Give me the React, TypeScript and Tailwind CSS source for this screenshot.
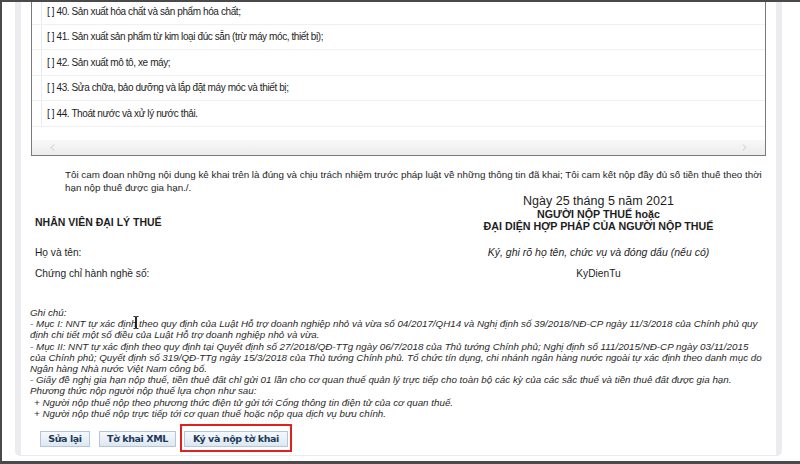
import { ChevronLeft, ChevronRight } from "lucide-react";

const industries = [
  "[ ] 40. Sản xuất hóa chất và sản phẩm hóa chất;",
  "[ ] 41. Sản xuất sản phẩm từ kim loại đúc sẵn (trừ máy móc, thiết bị);",
  "[ ] 42. Sản xuất mô tô, xe máy;",
  "[ ] 43. Sửa chữa, bảo dưỡng và lắp đặt máy móc và thiết bị;",
  "[ ] 44. Thoát nước và xử lý nước thải.",
];

const notes = [
  { text: "Ghi chú:", indent: false },
  { text: "- Mục I: NNT tự xác định theo quy định của Luật Hỗ trợ doanh nghiệp nhỏ và vừa số 04/2017/QH14 và Nghị định số 39/2018/NĐ-CP ngày 11/3/2018 của Chính phủ quy", indent: false },
  { text: "định chi tiết một số điều của Luật Hỗ trợ doanh nghiệp nhỏ và vừa.", indent: false },
  { text: "- Mục II: NNT tự xác định theo quy định tại Quyết định số 27/2018/QĐ-TTg ngày 06/7/2018 của Thủ tướng Chính phủ; Nghị định số 111/2015/NĐ-CP ngày 03/11/2015", indent: false },
  { text: "của Chính phủ; Quyết định số 319/QĐ-TTg ngày 15/3/2018 của Thủ tướng Chính phủ. Tổ chức tín dụng, chi nhánh ngân hàng nước ngoài tự xác định theo danh mục do", indent: false },
  { text: "Ngân hàng Nhà nước Việt Nam công bố.", indent: false },
  { text: "- Giấy đề nghị gia hạn nộp thuế, tiền thuê đất chỉ gửi 01 lần cho cơ quan thuế quản lý trực tiếp cho toàn bộ các kỳ của các sắc thuế và tiền thuê đất được gia hạn.", indent: false },
  { text: "Phương thức nộp người nộp thuế lựa chọn như sau:", indent: false },
  { text: "+ Người nộp thuế nộp theo phương thức điện tử gửi tới Cổng thông tin điện tử của cơ quan thuế.", indent: true },
  { text: "+ Người nộp thuế nộp trực tiếp tới cơ quan thuế hoặc nộp qua dịch vụ bưu chính.", indent: true },
];

const btn =
  "h-[16px] px-[6px] flex items-center justify-center border border-[#b4c6da] bg-gradient-to-b from-[#f6f9fc] to-[#dde7f1] text-[#1d3a5a] font-['DejaVu_Sans',sans-serif] font-bold text-[9.5px] tracking-[-0.4px] whitespace-nowrap";

export default function App() {
  return (
    <div className="relative w-[800px] h-[464px] overflow-hidden bg-white border-t-2 border-l-2 border-b-[3px] border-[#4a4a4a] font-['Liberation_Sans',Arial,sans-serif] text-[#1e1e1e]">
      <div className="flex h-full">
        <div className="w-[13px] shrink-0" />

        {/* main form panel */}
        <div className="w-[767px] h-[454px] shrink-0 flex flex-col border-x-[6px] border-b border-[#ebebf0] rounded-b-[5px]">
          {/* industries table (scrolled) */}
          <div className="mx-[10px] -mt-[3px] border-x border-b border-[#7a7a7a]">
            {industries.map((row) => (
              <div key={row} className="h-[25.5px] flex border-b border-[#f0f0f0]">
                <div className="w-[10px] border-r border-[#ebebeb]" />
                <div className="pl-[5px] flex items-center text-[10px] tracking-[-0.4px] whitespace-nowrap">{row}</div>
              </div>
            ))}
            <div className="h-[13.5px]" />
            <div className="h-[15px] flex items-center justify-between px-[15px] bg-gradient-to-b from-[#f8f8f8] to-[#ececec]">
              <ChevronLeft size={11} strokeWidth={2} className="text-[#c4c4c4]" />
              <ChevronRight size={11} strokeWidth={2} className="text-[#c4c4c4]" />
            </div>
          </div>

          {/* declaration */}
          <div className="mt-[12px] pl-[44px] text-[9.8px] leading-[13px] whitespace-nowrap">
            <div>
              Tôi cam đoan những nội dung kê khai trên là đúng và chịu trách nhiệm trước pháp luật về những thông tin đã khai; Tôi cam kết nộp đầy đủ số tiền thuế theo thời
            </div>
            <div>hạn nộp thuế được gia hạn./.</div>
          </div>

          {/* signatures */}
          <div className="mx-[10px] mt-[1px] grid grid-cols-[400px_1fr] text-[10.2px] whitespace-nowrap">
            <div />
            <div className="text-center text-[12.5px] leading-[13px]">Ngày 25 tháng 5 năm 2021</div>

            <div className="pl-[4px] pt-[8px] font-bold text-[10.5px] leading-[12px]">NHÂN VIÊN ĐẠI LÝ THUẾ</div>
            <div className="text-center font-bold text-[10.7px] leading-[12px]">
              <div>NGƯỜI NỘP THUẾ hoặc</div>
              <div>ĐẠI DIỆN HỢP PHÁP CỦA NGƯỜI NỘP THUẾ</div>
            </div>

            <div className="pl-[4px] mt-[14px] leading-[13px]">Họ và tên:</div>
            <div className="mt-[14px] text-center italic text-[10.5px] leading-[13px]">Ký, ghi rõ họ tên, chức vụ và đóng dấu (nếu có)</div>

            <div className="pl-[4px] mt-[7.5px] leading-[13px]">Chứng chỉ hành nghề số:</div>
            <div className="mt-[7.5px] text-center leading-[13px]">KyDienTu</div>
          </div>

          {/* notes */}
          <div className="relative mt-[27.5px] pl-[9px] italic text-[9.8px] leading-[11.2px] text-[#2a2a2a] whitespace-nowrap">
            {notes.map((n, i) => (
              <div key={i} className={n.indent ? "pl-[4px]" : ""}>
                {n.text}
              </div>
            ))}
            {/* mouse I-beam cursor */}
            <svg width="6" height="13" viewBox="0 0 6 13" className="absolute left-[112px] top-[9px]">
              <path d="M0.5 0.5h2v12h-2M5.5 0.5h-2v12h2" fill="none" stroke="#111" strokeWidth="0.9" />
            </svg>
          </div>

          {/* actions */}
          <div className="mt-[5px] pl-[19px] flex items-start">
            <div className="mt-[7px] flex gap-[9px]">
              <button className={btn + " w-[50px]"}>Sửa lại</button>
              <button className={btn + " w-[77px]"}>Tờ khai XML</button>
            </div>
            <div className="ml-[4px] border-2 border-[#e0221e] px-[2px] pt-[5px] pb-[3px]">
              <button className={btn + " w-[104px]"}>Ký và nộp tờ khai</button>
            </div>
          </div>
        </div>
      </div>
    </div>
  );
}
